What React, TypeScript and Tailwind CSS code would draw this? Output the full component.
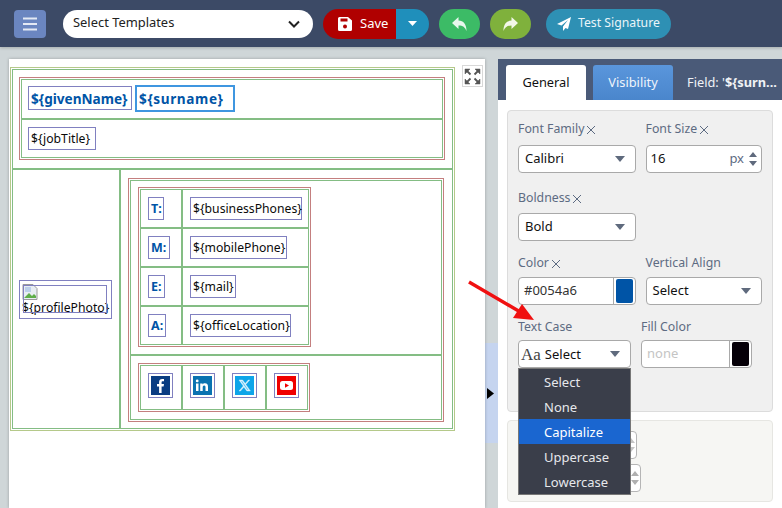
import type { ReactNode } from "react";

const sans = "font-['Noto_Sans',sans-serif]";

// red outer line + green inner line, the editor's nested table look
function Frame({ className = "", children }: { className?: string; children: ReactNode }) {
  return (
    <div className={`border border-[#c47f7f] p-px ${className}`}>
      <div className="h-full border border-[#84bd84]">{children}</div>
    </div>
  );
}

const tokenBase = "inline-flex shrink-0 items-center whitespace-nowrap pl-[2px] pt-px leading-none";
const plainToken = `${tokenBase} h-[23px] border border-[#8080c0] text-[12.2px] text-[#0a0a0a]`;
const labelToken = `${tokenBase} h-[23px] border border-[#8080c0] text-[12.5px] font-bold text-[#0054a6]`;

function Label({ children, clear }: { children: ReactNode; clear?: boolean }) {
  return (
    <div className="flex h-[17px] items-center gap-[2px] text-[12.3px] text-[#5d6b82]">
      {children}
      {clear && (
        <svg width="10" height="10" viewBox="0 0 10 10" className="stroke-[#5d6b82]">
          <path d="M1 1l8 8M9 1l-8 8" strokeWidth="1" />
        </svg>
      )}
    </div>
  );
}

function Caret() {
  return (
    <svg width="10" height="6" viewBox="0 0 10 6" className="fill-[#5f6a7d]">
      <path d="M0 0h10L5 6z" />
    </svg>
  );
}

function SelectBox({ value, className = "" }: { value: string; className?: string }) {
  return (
    <div className={`flex h-[28px] items-center justify-between rounded-[4px] border border-[#a9a9a9] bg-white pl-[6px] pr-[10px] text-[13px] text-[#111] ${className}`}>
      <span>{value}</span>
      <Caret />
    </div>
  );
}

function Spinner({ className = "fill-[#5f6a7d]" }: { className?: string }) {
  return (
    <svg width="8" height="16" viewBox="0 0 8 16" className={className}>
      <path d="M4 1l4 5H0zM4 15L0 10h8z" />
    </svg>
  );
}

const contactRows = [
  { label: "T:", value: "${businessPhones}", labelW: "w-[16px]", valueW: "w-[112px]", rowH: "h-[39px] border-b-2 border-[#84bd84]" },
  { label: "M:", value: "${mobilePhone}", labelW: "w-[22px]", valueW: "w-[97px]", rowH: "h-[39px] border-b-2 border-[#84bd84]" },
  { label: "E:", value: "${mail}", labelW: "w-[17px]", valueW: "w-[46px]", rowH: "h-[39px] border-b-2 border-[#84bd84]" },
  { label: "A:", value: "${officeLocation}", labelW: "w-[18px]", valueW: "w-[101px]", rowH: "h-[37px]" },
];

const socials = [
  {
    bg: "bg-[#0a3d82]",
    icon: <path d="M10.6 17V10.4h2l.4-2.5h-2.400V6.500c0-.8.300-1.200 1.200-1.200H13V3.100c-.4 0-1-.1-1.800-.1-1.900 0-3.100 1.100-3.100 3.200v1.700H6v2.500h2.100V17z" fill="#fff" />,
  },
  {
    bg: "bg-[#0a73b1]",
    icon: (
      <path d="M3 7.500h2.500V15H3zM4.200 3.500a1.400 1.400 0 110 2.800 1.400 1.400 0 010-2.800zM7.200 7.500h2.400v1c.4-.7 1.200-1.200 2.400-1.200 2.300 0 3 1.400 3 3.600V15h-2.500v-3.600c0-1-.2-1.900-1.300-1.900s-1.500.8-1.500 1.900V15H7.200z" fill="#fff" />
    ),
  },
  {
    bg: "bg-[#0ea5e9]",
    icon: <path d="M4 4h3.600l2.600 3.600L13.300 4h1.400l-3.900 4.500L15.400 15h-3.600l-2.900-4-3.400 4H4l4.300-5zm2 1l6.400 9h1L7 5z" fill="#dff3fd" stroke="#dff3fd" strokeWidth=".4" />,
  },
  {
    bg: "bg-[#f00000]",
    icon: (
      <>
        <rect x="3" y="5" width="13" height="9" rx="2.500" fill="#fff" />
        <path d="M8 7.300l4 2.200-4 2.200z" fill="#f00000" />
      </>
    ),
  },
];

const caseOptions = ["Select", "None", "Capitalize", "Uppercase", "Lowercase"];

export default function App() {
  return (
    <div className={`flex h-[508px] w-[782px] flex-col overflow-hidden bg-[#cfd6d8] ${sans}`}>
      {/* top toolbar */}
      <header className="flex h-[47px] shrink-0 items-center bg-[#3c4a66] pl-[14px] shadow-[0_1px_3px_rgba(0,0,0,0.2)]">
        <button className="flex h-[28px] w-[32px] items-center justify-center rounded-[4px] bg-[#6b86c0]">
          <svg width="16" height="14" viewBox="0 0 16 14" className="stroke-[#e4e9f4]">
            <path d="M1 1.500h14M1 7h14M1 12.500h14" strokeWidth="2" />
          </svg>
        </button>
        <div className="ml-[17px] flex h-[28px] w-[250px] items-center justify-between rounded-full bg-white pb-[2px] pl-[10px] pr-[13px] text-[12.9px] text-[#222]">
          <span>Select Templates</span>
          <svg width="12" height="8" viewBox="0 0 12 8" fill="none" className="mt-[2px] stroke-[#222]">
            <path d="M1 1.500l5 5 5-5" strokeWidth="2" />
          </svg>
        </div>
        <div className="ml-[10px] flex h-[30px]">
          <button className="flex w-[73px] items-center gap-[8px] rounded-l-full bg-[#b00000] pl-[15px] text-[13px] text-white">
            <svg width="14" height="14" viewBox="0 0 14 14">
              <path d="M1.500 0H10l4 3.500v9a1.500 1.500 0 01-1.500 1.500h-11A1.500 1.500 0 010 12.500v-11A1.500 1.500 0 011.500 0z" fill="#fff" />
              <rect x="2.500" y="1.500" width="7" height="3" fill="#b00000" />
              <circle cx="7" cy="9.500" r="2" fill="#b00000" />
            </svg>
            Save
          </button>
          <button className="flex w-[33px] items-center justify-center rounded-r-full bg-[#1f8fbb]">
            <svg width="9" height="5" viewBox="0 0 9 5" className="fill-white">
              <path d="M0 0h9L4.500 5z" />
            </svg>
          </button>
        </div>
        <button className="ml-[10px] flex h-[30px] w-[41px] items-center justify-center rounded-full bg-[#3cbb66]">
          <svg width="15" height="14" viewBox="0 0 15 14" className="fill-[#e8f7ed]">
            <path d="M6.500 0v3.500C11.500 3.800 14.500 7 14.500 14 13 10.300 11 8.500 6.500 8.500V12L0 6z" />
          </svg>
        </button>
        <button className="ml-[10px] flex h-[30px] w-[41px] items-center justify-center rounded-full bg-[#7fb13c]">
          <svg width="15" height="14" viewBox="0 0 15 14" className="fill-[#f2f7e8]">
            <path d="M8.500 0v3.500C3.500 3.800.5 7 .5 14 2 10.300 4 8.500 8.500 8.500V12L15 6z" />
          </svg>
        </button>
        <button className="ml-[15px] flex h-[30px] w-[125px] items-center gap-[7px] rounded-full bg-[#2e90b4] pl-[11px] text-[12.25px] text-[#eaf5f9]">
          <svg width="14" height="14" viewBox="0 0 14 14" className="fill-white">
            <path d="M14 0L0 7l4.500 1.500L11 3 6 9.500V14l2.500-3 2.500 1z" />
          </svg>
          Test Signature
        </button>
      </header>

      <main className="mt-[12px] flex min-h-0 flex-1 items-start">
        {/* signature canvas */}
        <section className="relative ml-[9px] h-[449px] w-[476px] shrink-0 bg-white pl-px pt-[8px] shadow-[0_0_3px_rgba(0,0,0,0.25)]">
          <div className="h-[364px] w-[445px] border border-[#b5c98a] p-px">
            <div className="h-full border border-[#84bd84]">
              <div className="h-[100px] border-b-2 border-[#84bd84] px-[6px] pt-[7px]">
                <Frame className="h-[83px] w-[426px]">
                  <div className="flex h-[40px] items-center gap-[3px] border-b-2 border-[#84bd84] pb-[2px] pl-[6px]">
                    <span className={`${tokenBase} h-[24px] w-[104px] border border-[#8080c0] text-[13.6px] font-bold text-[#0054a6]`}>{"${givenName}"}</span>
                    <span className={`${tokenBase} h-[27px] w-[100px] border-2 border-[#3f96e0] text-[13.6px] font-bold tracking-[0.6px] text-[#0054a6]`}>{"${surname}"}</span>
                  </div>
                  <div className="flex h-[37px] items-center pl-[6px]">
                    <span className={`${plainToken} w-[68px]`}>{"${jobTitle}"}</span>
                  </div>
                </Frame>
              </div>
              <div className="flex h-[258px]">
                <div className="flex w-[108px] shrink-0 items-center border-r-2 border-[#84bd84] pl-[6px]">
                  <div className="relative flex h-[39px] w-[93px] flex-col border border-[#8080c0] pl-[2px] pt-[3px] text-[12.2px] leading-none text-[#0a0a0a]">
                    <svg width="16" height="16" viewBox="0 0 16 16" className="shrink-0">
                      <path d="M1 .5h10l4 4v11H1z" fill="#e8edf3" stroke="#9a9a9a" />
                      <path d="M2 14l5-5 3 3 2-2 2 2v2H2z" fill="#5fae4a" />
                      <path d="M3 3h6v5H3z" fill="#bcd0ea" />
                    </svg>
                    <span className="mt-[2px] whitespace-nowrap">{"${profilePhoto}"}</span>
                    <span className="absolute left-[3px] top-[4px] h-[28px] w-[84px] border border-[#8080c0]" />
                  </div>
                </div>
                <div className="px-[7px] pt-[8px]">
                  <Frame className="h-[244px] w-[316px]">
                    <div className="h-[175px] border-b-2 border-[#84bd84] pl-[7px] pt-[6px]">
                      <Frame className="h-[160px] w-[173px]">
                        {contactRows.map((row) => (
                          <div key={row.label} className={`flex ${row.rowH}`}>
                            <div className="flex w-[42px] shrink-0 items-center border-r-2 border-[#84bd84] pl-[7px]">
                              <span className={`${labelToken} ${row.labelW}`}>{row.label}</span>
                            </div>
                            <div className="flex items-center pl-[7px]">
                              <span className={`${plainToken} ${row.valueW}`}>{row.value}</span>
                            </div>
                          </div>
                        ))}
                      </Frame>
                    </div>
                    <div className="pl-[7px] pt-[7px]">
                      <div className="h-[49px] w-[172px] border border-[#c47f7f] p-px">
                        <div className="flex h-full border border-[#84bd84]">
                          {socials.map((s, i) => (
                            <div key={i} className={`flex w-[42px] shrink-0 items-start pl-[7px] pt-[7px] ${i < 3 ? "border-r-2 border-[#84bd84]" : ""}`}>
                              <div className="border border-[#8080c0] p-[2px]">
                                <div className={`h-[19px] w-[19px] ${s.bg}`}>
                                  <svg width="19" height="19" viewBox="0 0 19 19">
                                    {s.icon}
                                  </svg>
                                </div>
                              </div>
                            </div>
                          ))}
                        </div>
                      </div>
                    </div>
                  </Frame>
                </div>
              </div>
            </div>
          </div>
          <button className="absolute left-[453px] top-[6px] flex h-[22px] w-[21px] items-center justify-center border border-[#d8d8d8] bg-white">
            <svg width="17" height="17" viewBox="0 0 17 17" fill="none" className="fill-[#555] stroke-[#555]">
              <path d="M1 1h5L1 6zM16 1h-5l5 5zM1 16h5l-5-5zM16 16h-5l5-5z" strokeWidth=".5" />
              <path d="M3 3l3.500 3.500M14 3l-3.500 3.500M3 14l3.500-3.500M14 14l-3.500-3.500" strokeWidth="1.800" />
            </svg>
          </button>
        </section>

        {/* collapse handle */}
        <div className="mt-[284px] flex h-[100px] w-[13px] shrink-0 items-center bg-[#c5d4ef] pl-[2px]">
          <svg width="7" height="11" viewBox="0 0 7 11">
            <path d="M0 0l7 5.500L0 11z" />
          </svg>
        </div>

        {/* properties panel */}
        <aside className="h-[449px] w-[284px] shrink-0 bg-white">
          <div className="flex h-[41px] items-end bg-[#4a5a78] pl-[8px] text-[12.8px]">
            <div className="flex h-[35px] w-[80px] items-center justify-center rounded-t-[3px] bg-white text-[#111]">General</div>
            <div className="ml-[7px] flex h-[35px] w-[80px] items-center justify-center rounded-t-[3px] bg-linear-to-b from-[#5a96dc] to-[#4a86cc] text-[#eef4fb]">Visibility</div>
            <div className="ml-[14px] flex h-[35px] items-center whitespace-nowrap text-[#f0f2f6]">
              Field: '<b>{"${surn..."}</b>
            </div>
          </div>

          <div className="relative ml-[9px] mt-[10px] h-[302px] w-[266px] rounded-[4px] border border-[#dcdcdc] bg-[#f0f0f0] px-[10px] pt-[10px]">
            <div className="flex gap-[10px]">
              <div className="w-[118px]">
                <Label clear>Font Family</Label>
                <SelectBox value="Calibri" className="mt-[7px]" />
              </div>
              <div className="w-[117px]">
                <Label clear>Font Size</Label>
                <div className="mt-[7px] flex h-[28px] items-center rounded-[4px] border border-[#a9a9a9] bg-white pl-[4px] pr-[4px] text-[13px] text-[#111]">
                  <span className="flex-1">16</span>
                  <span className="mr-[5px] text-[#5d6b82]">px</span>
                  <Spinner />
                </div>
              </div>
            </div>

            <div className="mt-[17px] w-[118px]">
              <Label clear>Boldness</Label>
              <SelectBox value="Bold" className="mt-[6px]" />
            </div>

            <div className="mt-[14px] flex gap-[10px]">
              <div className="w-[118px]">
                <Label clear>Color</Label>
                <div className="mt-[5px] flex h-[28px] items-center rounded-[4px] border border-[#a9a9a9] bg-white pl-[5px] text-[13px] text-[#333]">
                  <span className="flex-1">#0054a6</span>
                  <div className="flex h-full items-center border-l border-[#a9a9a9] px-[2px]">
                    <div className="h-[24px] w-[17px] rounded-[2px] bg-[#0054a6]" />
                  </div>
                </div>
              </div>
              <div className="w-[117px]">
                <Label>Vertical Align</Label>
                <SelectBox value="Select" className="mt-[5px]" />
              </div>
            </div>

            <div className="mt-[14px] flex gap-[10px]">
              <div className="relative w-[113px]">
                <Label>Text Case</Label>
                <div className="mt-[4px] flex h-[28px] items-center justify-between rounded-[4px] border border-[#a9a9a9] bg-white pl-[2px] pr-[10px] text-[13px] text-[#111]">
                  <span className="flex items-center gap-[4px] pt-px">
                    <span className="font-['Liberation_Serif',serif] text-[17px] leading-none text-[#444]">Aa</span>
                    Select
                  </span>
                  <Caret />
                </div>
                <ul className="absolute left-0 top-[49px] z-10 w-[113px] border border-[#777] bg-[#3a3e4a] text-[13px] text-[#e6e8ec]">
                  {caseOptions.map((opt) => (
                    <li key={opt} className={`flex h-[25px] items-center pl-[25px] pt-[2px] ${opt === "Capitalize" ? "bg-[#1a66d0] text-white" : ""}`}>
                      {opt}
                    </li>
                  ))}
                </ul>
              </div>
              <div className="w-[111px]">
                <Label>Fill Color</Label>
                <div className="mt-[4px] flex h-[28px] items-center rounded-[4px] border border-[#a9a9a9] bg-white pl-[5px] text-[13px] text-[#c4c4c4]">
                  <span className="flex-1">none</span>
                  <div className="flex h-full items-center border-l border-[#a9a9a9] px-[2px]">
                    <div className="h-[24px] w-[17px] rounded-[2px] bg-[#060008]" />
                  </div>
                </div>
              </div>
            </div>
          </div>

          {/* second group, mostly under the open menu */}
          <div className="ml-[9px] mt-[8px] h-[82px] w-[266px] rounded-[4px] border border-[#e6e6e2] bg-[#f6f6f3] pl-[10px] pt-[10px]">
            <div className="flex h-[28px] w-[119px] items-center justify-end rounded-[4px] border border-[#b5b5b5] bg-white pr-[1px]">
              <Spinner className="fill-[#c4c4c4]" />
            </div>
            <div className="mt-[5px] flex h-[28px] w-[123px] items-center justify-end rounded-[4px] border border-[#b5b5b5] bg-white pr-[1px]">
              <Spinner className="fill-[#b0b0b0]" />
            </div>
          </div>
        </aside>
      </main>

      {/* annotation arrow over the screenshot */}
      <svg width="782" height="508" viewBox="0 0 782 508" className="pointer-events-none absolute left-0 top-0 z-20">
        <path d="M469 282L522 313" stroke="#f01010" strokeWidth="3.500" />
        <path d="M534 320L513 318L522 304z" fill="#f01010" />
      </svg>
    </div>
  );
}
